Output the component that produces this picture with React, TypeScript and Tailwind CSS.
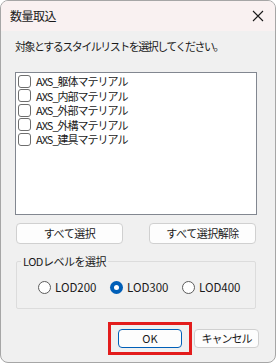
import React from 'react';

const font = { fontFamily: '"Noto Sans CJK JP", "Noto Sans", sans-serif' };

const Checkbox = () => (
  <span className="inline-block w-[13px] h-[13px] rounded-[3px] border border-[#6e6e6e] bg-white shrink-0" />
);

const Radio = ({ checked }: { checked?: boolean }) =>
  checked ? (
    <span className="w-[13px] h-[13px] rounded-full bg-[#005fb8] flex items-center justify-center shrink-0">
      <span className="w-[5px] h-[5px] rounded-full bg-white" />
    </span>
  ) : (
    <span className="w-[13px] h-[13px] rounded-full border border-[#5c5c5c] bg-white shrink-0" />
  );

const App = () => {
  const items = ['AXS_躯体マテリアル', 'AXS_内部マテリアル', 'AXS_外部マテリアル', 'AXS_外構マテリアル', 'AXS_建具マテリアル'];
  const levels = [
    { label: 'LOD200', checked: false },
    { label: 'LOD300', checked: true },
    { label: 'LOD400', checked: false }
  ];

  return (
    <div
      className="w-[276px] h-[363px] flex flex-col bg-[#f0f0f0] border border-[#a6a6a6] rounded-lg overflow-hidden text-[11px] leading-[14px] text-[#1a1a1a]"
      style={font}
    >
      <div className="h-[30px] shrink-0 bg-[#f9f1f1] flex items-center justify-between pl-[9px] pr-[10px]">
        <span className="text-[12px] leading-[14px] tracking-[-0.5px]">数量取込</span>
        <svg width="12" height="12" viewBox="0 0 12 12" className="mr-[1px]">
          <path d="M1 1 L11 11 M11 1 L1 11" stroke="#1a1a1a" strokeWidth="1.1" />
        </svg>
      </div>

      <div className="flex flex-col pl-[14px] pr-[18px]">
        <p className="mt-[8px] h-[14px] whitespace-nowrap tracking-[-1.5px]">対象とするスタイルリストを選択してください。</p>

        <div className="mt-[19px] h-[143px] bg-white border border-[#828790] pl-[2px] pt-[1px] flex flex-col">
          {items.map((item) => (
            <div key={item} className="h-[14.5px] flex items-center gap-[5px]">
              <Checkbox />
              <span className="leading-[14px] whitespace-nowrap tracking-[-1px]">{item}</span>
            </div>
          ))}
        </div>

        <div className="mt-[8px] flex justify-between px-[1px]">
          <button className="w-[107px] h-[21px] bg-[#fdfdfd] border border-[#d0d0d0] rounded-[4px] leading-none tracking-[-0.5px]">すべて選択</button>
          <button className="w-[107px] h-[21px] bg-[#fdfdfd] border border-[#d0d0d0] rounded-[4px] leading-none tracking-[-0.5px]">すべて選択解除</button>
        </div>

        <fieldset className="mt-[10px] mx-[1px] border border-[#dcdcdc] rounded-[2px] h-[55px] px-[4px] pt-[13px]">
          <legend className="px-[2px] leading-[14px] tracking-[-0.5px]">LODレベルを選択</legend>
          <div className="ml-[17px] flex items-center gap-[14px]">
            {levels.map((l) => (
              <label key={l.label} className="flex items-center gap-[4px] w-[58px]">
                <Radio checked={l.checked} />
                <span className="leading-none text-[11.5px]">{l.label}</span>
              </label>
            ))}
          </div>
        </fieldset>

        <div className="mt-[13px] -mr-[2px] flex justify-end items-center gap-[2px]">
          <div className="border-[3px] border-[#e31c1c] px-[7px] py-[4px]">
            <button className="w-[64px] h-[19px] bg-[#fdfdfd] border border-[#005fb8] rounded-[4px] leading-none">OK</button>
          </div>
          <button className="w-[65px] h-[19px] bg-[#fdfdfd] border border-[#d0d0d0] rounded-[4px] leading-none tracking-[-1px]">キャンセル</button>
        </div>
      </div>
    </div>
  );
};

export default App;
